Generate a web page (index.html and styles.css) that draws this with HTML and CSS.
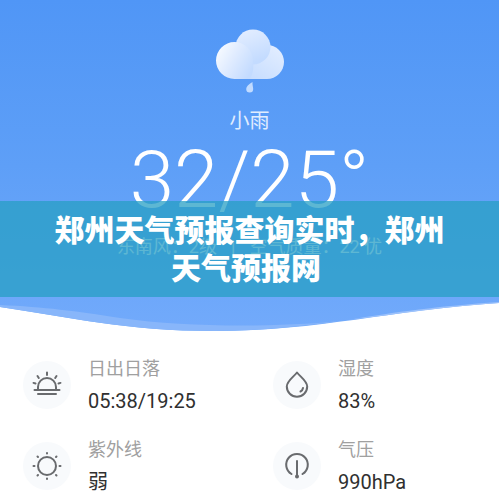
FILE: index.html
```html
<!DOCTYPE html>
<html lang="zh-CN">
<head>
<meta charset="utf-8">
<meta name="viewport" content="width=device-width, initial-scale=1">
<title>郑州天气预报</title>
<link rel="stylesheet" href="styles.css">
</head>
<body>
<main>
  <section class="hero">
    <svg class="cloud" viewBox="0 0 68 64" aria-hidden="true">
      <defs>
        <linearGradient id="back" x1="0" y1="0" x2="0.4" y2="1">
          <stop offset="0" stop-color="#e6efff"/>
          <stop offset="1" stop-color="#c3dbff"/>
        </linearGradient>
        <linearGradient id="front" x1="0" y1="0.1" x2="1" y2="0.7">
          <stop offset="0" stop-color="#fbfdff"/>
          <stop offset="0.5" stop-color="#dfebff"/>
          <stop offset="1" stop-color="#c3dbff"/>
        </linearGradient>
        <linearGradient id="side" x1="0" y1="1" x2="0.8" y2="0">
          <stop offset="0" stop-color="#c3dbff"/>
          <stop offset="1" stop-color="#e2edff"/>
        </linearGradient>
      </defs>
      <path fill="url(#side)" d="M26 50h25a17 17 0 1 0 0-34L34 25z"/>
      <circle cx="37" cy="18" r="17.500" fill="url(#back)"/>
      <path fill="url(#front)" d="M18.500 13a18.500 18.500 0 0 0 0 37H34c3-5 4-11 3-18.500A18.500 18.500 0 0 0 18.500 13z"/>
      <path fill="#c1dbff" d="M36.500 53c-4 2.500-6.300 4.500-6.300 7a3.500 3.500 0 0 0 7 0c0-2-.9-4-.7-7z"/>
    </svg>
    <p class="condition">小雨</p>
    <p class="temperature">32/25°</p>
    <p class="summary">东南风：2级<span class="divider">|</span>空气质量：22 优</p>
    <h1 class="banner">郑州天气预报查询实时，郑州<br>天气预报网&nbsp;</h1>
    <svg class="wave" viewBox="0 0 499 34" preserveAspectRatio="none" aria-hidden="true">
      <path fill="#fff" d="M0 10C70 20 125 34 215 34C320 34 390 13 499 6V34H0z"/>
      <path fill="#88b6fa" d="M0 10C70 20 125 34 215 34C255 34 300 30 340 24C280 30 190 31 120 21C75 14 45 10 0 8z"/>
      <path fill="#9dc2fb" d="M348 23C400 17 440 10 499 6V5C440 9 395 15 348 23z"/>
    </svg>
  </section>
  <dl class="details">
    <div class="item">
      <svg class="icon" viewBox="0 0 48 48" aria-hidden="true">
        <circle class="disc" cx="24" cy="24" r="24"/>
        <path d="M11.500 29h25M15 33h18M15 29v-3a9 9 0 0 1 18 0v3M24 14v-2.500M15.800 17l-1.300-2M32.200 17l1.300-2M12.500 22.500l-2-.6M35.500 22.500l2-.6"/>
      </svg>
      <div class="reading"><dt>日出日落</dt><dd>05:38/19:25</dd></div>
    </div>
    <div class="item">
      <svg class="icon" viewBox="0 0 48 48" aria-hidden="true">
        <circle class="disc" cx="24" cy="24" r="24"/>
        <path d="M24 11.500C20.500 16 13.800 20 13.800 25.500a10.200 10.200 0 0 0 20.400 0C34.200 20 27.500 16 24 11.500zM30 27q-.4 2.500-2.500 3.500"/>
      </svg>
      <div class="reading"><dt>湿度</dt><dd>83%</dd></div>
    </div>
    <div class="item">
      <svg class="icon" viewBox="0 0 48 48" aria-hidden="true">
        <circle class="disc" cx="24" cy="24" r="24"/>
        <circle cx="24" cy="24" r="9"/>
        <path d="M24 11.500v-.6M24 36.500v.6M11.500 24h-1M36.500 24h1M15 15l-.5-.5M33 15l.5-.5M15 33l-.5.5M33 33l.5.5"/>
      </svg>
      <div class="reading"><dt>紫外线</dt><dd>弱</dd></div>
    </div>
    <div class="item">
      <svg class="icon" viewBox="0 0 48 48" aria-hidden="true">
        <circle class="disc" cx="24" cy="24" r="24"/>
        <path d="M18.500 32a10.800 10.800 0 1 1 11 0M24 19v15"/>
        <circle class="bulb" cx="24" cy="34.500" r="1"/>
      </svg>
      <div class="reading"><dt>气压</dt><dd>990hPa</dd></div>
    </div>
  </dl>
</main>
</body>
</html>
```
FILE: styles.css
```css
* {
  box-sizing: border-box;
}

body {
  margin: 0;
  background: #fff;
  font-family: Roboto, "Noto Sans CJK SC", sans-serif;
  overflow-x: hidden;
}

p,
h1,
dl,
dd {
  margin: 0;
}

.hero {
  position: relative;
  display: flex;
  flex-direction: column;
  align-items: center;
  padding-top: 29px;
  background: linear-gradient(#5096f6, #5e9ff7 50%, #72aafb);
  color: #fff;
}

.cloud {
  width: 68px;
  height: 64px;
}

.condition {
  margin-top: 13px;
  font-size: 20px;
  line-height: 30px;
  color: #e0edff;
}

.temperature {
  font-size: 80px;
  font-weight: 300;
  line-height: 88px;
}

.summary {
  margin-top: 11px;
  font-size: 18px;
  line-height: 24px;
  white-space: nowrap;
}

.divider {
  margin: 0 14px;
}

.banner {
  position: absolute;
  top: 201px;
  left: 0;
  width: 100%;
  padding: 8px 0 12px;
  background: rgba(39, 159, 196, 0.75);
  font-size: 30px;
  font-weight: 900;
  font-family: "Noto Sans CJK SC", sans-serif;
  line-height: 38px;
  text-align: center;
}

.wave {
  display: block;
  width: 100%;
  height: 34px;
  margin-top: 38px;
}

.details {
  display: grid;
  grid-template-columns: 1fr 1fr;
  gap: 17px 24px;
  padding: 24px 0 0 23px;
}

.item {
  display: flex;
  align-items: flex-start;
  gap: 17px;
}

.icon {
  flex: none;
  width: 48px;
  height: 48px;
  margin-top: 6px;
  fill: none;
  stroke: #696b6e;
  stroke-width: 2;
  stroke-linecap: round;
  stroke-linejoin: round;
}

.disc {
  fill: #f8fafc;
  stroke: none;
}

.bulb {
  fill: #696b6e;
}

dt {
  font-size: 18px;
  line-height: 28px;
  color: #a0a0a0;
}

dd {
  font-size: 20px;
  line-height: 36px;
  color: #303030;
}
```
